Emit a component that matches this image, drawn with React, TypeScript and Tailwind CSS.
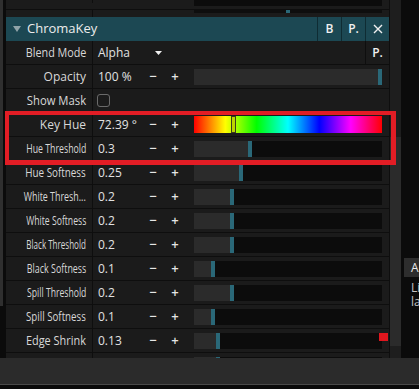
import React from "react";

type Slider = { label: string; value: string; frac: number; squeeze: string; flag?: boolean };

const sliders: Slider[] = [
  { label: "Hue Threshold", value: "0.3", frac: 0.3, squeeze: "scale-x-[0.73]" },
  { label: "Hue Softness", value: "0.25", frac: 0.25, squeeze: "scale-x-[0.82]" },
  { label: "White Thresh...", value: "0.2", frac: 0.2, squeeze: "scale-x-[0.74]" },
  { label: "White Softness", value: "0.2", frac: 0.2, squeeze: "scale-x-[0.72]" },
  { label: "Black Threshold", value: "0.2", frac: 0.2, squeeze: "scale-x-[0.67]" },
  { label: "Black Softness", value: "0.1", frac: 0.1, squeeze: "scale-x-[0.74]" },
  { label: "Spill Threshold", value: "0.2", frac: 0.2, squeeze: "scale-x-[0.72]" },
  { label: "Spill Softness", value: "0.1", frac: 0.1, squeeze: "scale-x-[0.81]" },
  { label: "Edge Shrink", value: "0.13", frac: 0.13, squeeze: "scale-x-[0.91]", flag: true },
  { label: "Edge Feather", value: "0.13", frac: 0.13, squeeze: "scale-x-[0.91]" },
];

function Track({ frac }: { frac: number }) {
  const pos = Math.min(frac * 188, 186);
  return (
    <div className="relative h-[16px] w-[188px] bg-[#0c0c0c]">
      <div className="absolute inset-y-0 left-0 bg-[#2b2b2b]" style={{ width: pos }} />
      <div className="absolute inset-y-0 w-[4px] bg-[#2a6878]" style={{ left: pos - 2 }} />
    </div>
  );
}

function Label({ text, squeeze = "" }: { text: string; squeeze?: string }) {
  return (
    <div className="flex h-full w-[87px] shrink-0 items-center justify-end border-r border-[#0e0e0e] pr-[6px]">
      <span className={`inline-block origin-right whitespace-nowrap text-[12px] text-[#d8d8d8] ${squeeze}`}>{text}</span>
    </div>
  );
}

function Steppers() {
  return (
    <>
      <div className="flex w-[22px] justify-center text-[13px] font-semibold text-[#e6e6e6]">−</div>
      <div className="flex w-[22px] justify-center text-[13px] font-semibold text-[#e6e6e6]">+</div>
    </>
  );
}

function SliderRow({ s }: { s: Slider }) {
  return (
    <div className="relative flex h-[24px] shrink-0 items-center border-b border-[#0e0e0e] bg-[#1b1b1b]">
      <Label text={s.label} squeeze={s.squeeze} />
      <div className="w-[49px] pl-[5px] text-[12px] text-[#e2e2e2]">{s.value}</div>
      <Steppers />
      <div className="ml-[8px]">
        <Track frac={s.frac} />
      </div>
      {s.flag && <div className="absolute left-[373px] top-[4px] h-[8px] w-[9px] bg-[#e0161e]" />}
    </div>
  );
}

export default function App() {
  return (
    <div className="relative h-[389px] w-[419px] overflow-hidden bg-[#0b0b0b] font-['Open_Sans',sans-serif]">
      <div className="flex h-[358px]">
        {/* left edge */}
        <div className="flex w-[3px] flex-col">
          <div className="h-[306px] bg-[#2f2f2f]" />
        </div>
        <div className="w-[3px]" />

        {/* effect panel */}
        <div className="flex w-[384px] flex-col overflow-hidden border-r border-[#0e0e0e]">
          {/* previous effect, cut off */}
          <div className="-mt-[14px] flex h-[24px] shrink-0 items-center border-b border-[#0e0e0e] bg-[#1b1b1b]">
            <div className="-translate-y-[4px] flex items-center">
              <Label text="Scale" />
              <div className="w-[49px] pl-[5px] text-[12px] text-[#e2e2e2]">1</div>
              <Steppers />
            </div>
            <div className="ml-[8px] h-[16px] w-[188px] bg-[#0c0c0c]" />
          </div>
          <div className="flex h-[7px] shrink-0 bg-[#1b1b1b]">
            <div className="w-[87px] border-r border-[#0e0e0e]" />
            <div className="ml-[101px] h-[3px] w-[188px] bg-[#0e0e0e]">
              <div className="ml-[92px] h-full w-[4px] bg-[#2a6878]" />
            </div>
          </div>

          {/* header */}
          <div className="flex h-[24px] shrink-0 items-center bg-[#1c4853]">
            <svg width="8" height="6" viewBox="0 0 8 6" className="ml-[7px]">
              <polygon points="0,0 8,0 4,6" fill="#8fa3a8" />
            </svg>
            <span className="ml-[6px] text-[13px] text-[#ececec]">ChromaKey</span>
            <div className="flex-1" />
            {["B", "P."].map((b) => (
              <div key={b} className="flex h-full w-[24px] items-center justify-center border-l border-[#0f2c33] text-[12px] font-semibold text-[#f0f0f0]">
                {b}
              </div>
            ))}
            <div className="flex h-full w-[24px] items-center justify-center border-l border-[#0f2c33]">
              <svg width="10" height="10" viewBox="0 0 10 10">
                <path d="M1 1 L9 9 M9 1 L1 9" stroke="#f0f0f0" strokeWidth="1.4" />
              </svg>
            </div>
          </div>

          {/* Blend Mode */}
          <div className="flex h-[24px] shrink-0 items-center border-b border-[#0e0e0e] bg-[#1b1b1b]">
            <Label text="Blend Mode" squeeze="scale-x-[0.9]" />
            <div className="w-[58px] pl-[5px] text-[12px] text-[#e2e2e2]">Alpha</div>
            <div className="flex w-[14px] justify-center">
              <svg width="7" height="4" viewBox="0 0 7 4">
                <polygon points="0,0 7,0 3.5,4" fill="#f0f0f0" />
              </svg>
            </div>
            <div className="flex-1" />
            <div className="flex h-full w-[24px] items-center justify-center border-l border-[#0e0e0e] text-[12px] font-semibold text-[#f0f0f0]">
              P.
            </div>
          </div>

          {/* Opacity */}
          <SliderRow s={{ label: "Opacity", value: "100 %", frac: 1, squeeze: "" }} />

          {/* Show Mask */}
          <div className="flex h-[24px] shrink-0 items-center border-b border-[#0e0e0e] bg-[#1b1b1b]">
            <Label text="Show Mask" squeeze="scale-x-[0.94]" />
            <div className="pl-[4px]">
              <div className="h-[13px] w-[13px] rounded-[3px] border-[1.5px] border-[#6a6a6a]" />
            </div>
          </div>

          {/* Key Hue */}
          <div className="flex h-[24px] shrink-0 items-center border-b border-[#0e0e0e] bg-[#1b1b1b]">
            <Label text="Key Hue" />
            <div className="w-[49px] pl-[5px] text-[12px] text-[#e2e2e2]">72.39 °</div>
            <Steppers />
            <div className="relative ml-[8px] h-[17px] w-[188px] bg-[linear-gradient(to_right,#ff0000,#ffff00,#00ff00,#00ffff,#0000ff,#ff00ff,#ff0000)]">
              <div className="absolute inset-y-0 left-[37px] w-[5px] border border-[#3c3c1c] bg-[#bcd400]" />
            </div>
          </div>

          {sliders.map((s) => (
            <SliderRow key={s.label} s={s} />
          ))}
        </div>

        {/* scrollbar */}
        <div className="flex w-[11px] flex-col bg-[#1e1e1e]">
          <div className="mt-[137px] h-[209px] bg-[#2b2b2b]" />
        </div>

        {/* next panel, cut off */}
        <div className="flex flex-1 flex-col overflow-hidden pl-[3px]">
          <div className="mt-[258px] flex h-[19px] items-center bg-[#2d2d2d] pl-[7px] text-[12px] text-[#eaeaea]">A</div>
          <div className="pl-[7px] pt-[4px] text-[12px] leading-[14px] text-[#c4c4c4]">
            <div>Li</div>
            <div>la</div>
          </div>
        </div>
      </div>

      {/* bottom bar */}
      <div className="h-[27px] border-b border-[#4a4a4a] bg-[#2b2b2b]" />

      {/* highlight */}
      <div className="absolute left-[5px] top-[111px] h-[54px] w-[391px] border-b-[5px] border-l-4 border-r-[5px] border-t-4 border-[#e21d25]" />
    </div>
  );
}
